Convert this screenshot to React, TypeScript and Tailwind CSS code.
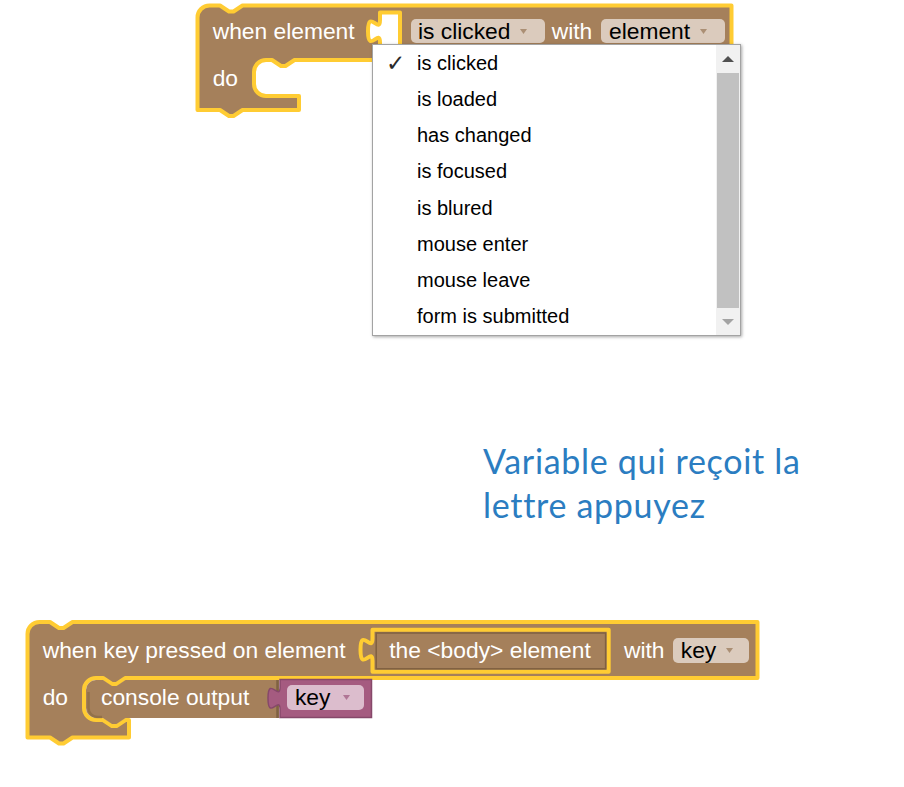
import React from 'react';

const brown = '#a5805b';
const gold = '#ffcc33';
const purple = '#a55b80';

const events = [
  'is clicked',
  'is loaded',
  'has changed',
  'is focused',
  'is blured',
  'mouse enter',
  'mouse leave',
  'form is submitted',
];

const Caret = ({ color }: { color: string }) => (
  <svg width="7" height="5" viewBox="0 0 7 5" className="shrink-0">
    <path d="M0 0h7L3.5 5z" fill={color} />
  </svg>
);

function EventMenu() {
  return (
    <div className="absolute left-[179px] top-[44px] z-10 flex w-[369px] h-[292px] border border-[#a3a3a3] bg-white shadow-[1px_1px_3px_rgba(0,0,0,0.35)] text-[20px] text-black">
      <ul className="flex-1">
        {events.map((e, i) => (
          <li key={e} className="flex items-center h-[36.15px] leading-none">
            <span className="w-[44px] pl-[13px] font-['DejaVu_Sans',sans-serif] text-[23px] font-bold text-[#2a2a2a]">
              {i === 0 ? '✓' : ''}
            </span>
            <span>{e}</span>
          </li>
        ))}
      </ul>
      <div className="flex flex-col w-[24px] bg-[#f1f1f1]">
        <div className="flex items-center justify-center h-[28px]">
          <svg width="12" height="6" viewBox="0 0 12 6">
            <path d="M6 0L12 6H0z" fill="#505050" />
          </svg>
        </div>
        <div className="mx-[1px] h-[235px] bg-[#c1c1c1]" />
        <div className="flex flex-1 items-center justify-center">
          <svg width="12" height="6" viewBox="0 0 12 6">
            <path d="M0 0h12L6 6z" fill="#a3a3a3" />
          </svg>
        </div>
      </div>
    </div>
  );
}

function WhenElementBlock() {
  return (
    <div className="relative ml-[193px] w-[545px] h-[125px] shrink-0">
      <svg className="absolute inset-0 overflow-visible" width="545" height="125" viewBox="193 0 545 125">
        <path
          fillRule="evenodd"
          fill={brown}
          stroke={gold}
          strokeWidth="4"
          strokeLinejoin="round"
          d="M197.5 17.5A12 12 0 0 1 209.5 5.5H220l9 6h4.5l9-6H731.5V60H294.5l-9 6h-4.5l-9-6H266A12 12 0 0 0 254 72V84A12 12 0 0 0 266 96H299V110H242.5l-9 6h-4.5l-9-6H197.5Z M400 12.5H380V20c0 15-12-12-12 11.25s12-3.75 12 11.25V52H400Z"
        />
      </svg>
      <div className="relative flex flex-col pt-[6px] pl-[19.7px] text-white leading-[23px]">
        <div className="flex items-center h-[50px]">
          <span className="w-[198px] whitespace-nowrap">when element</span>
          <span className="flex items-center h-[23.5px] pl-[7.3px] pr-[18px] rounded-[5px] bg-[#dbcbbd] text-black">
            <span className="w-[92.5px] whitespace-nowrap">is clicked</span>
            <span className="ml-[9.5px]"><Caret color="#ab8f74" /></span>
          </span>
          <span className="ml-[6.7px] w-[40.5px]">with</span>
          <span className="ml-[8.8px] flex items-center h-[23.5px] pl-[8px] pr-[18.4px] rounded-[5px] bg-[#dbcbbd] text-black">
            <span className="w-[81.1px] whitespace-nowrap">element</span>
            <span className="ml-[9.5px]"><Caret color="#ab8f74" /></span>
          </span>
        </div>
        <div className="flex items-center h-[45px]">
          <span>do</span>
        </div>
      </div>
      <EventMenu />
    </div>
  );
}

function KeyPressedBlock() {
  return (
    <div className="relative ml-[23px] mt-[89px] w-[740px] h-[135px] shrink-0">
      <svg className="absolute inset-0 overflow-visible" width="740" height="135" viewBox="23 615 740 135">
        {/* event block */}
        <path
          fill={brown}
          stroke={gold}
          strokeWidth="4"
          strokeLinejoin="round"
          d="M27.5 633A12 12 0 0 1 39.5 621H50l9 6h4.5l9-6H757.5V677H125.5l-9 6h-4.5l-9-6H96A12 12 0 0 0 84 689V707A12 12 0 0 0 96 719H103l9 6h4.5l9-6H129V736.5H72.5l-9 6h-4.5l-9-6H27.5Z"
        />
        {/* console output */}
        <path
          fill={brown}
          d="M86 689A10 10 0 0 1 96 679H103l9 6h4.5l9-6H279V717H125.5l-9 6h-4.5l-9-6H96A10 10 0 0 1 86 707Z"
        />
        <path d="M88.5 691V707A9 9 0 0 0 97.5 716H102" fill="none" stroke="#86673f" strokeWidth="2.5" strokeOpacity="0.6" />
        <path d="M277.5 679V717" stroke="#7f6243" strokeWidth="2.5" />
        {/* key variable */}
        <path
          fill={purple}
          stroke="#86486a"
          strokeWidth="1.5"
          d="M280 678.5H371.5V716.5H280V708.5c0-15-12 12-12-11.25s12 3.75 12-11.25Z"
        />
        {/* the <body> element */}
        <path
          fill={brown}
          stroke={gold}
          strokeWidth="4"
          strokeLinejoin="round"
          d="M372.5 628.7H608.7V670.8H372.5V660c0-15-12 12-12-11.25s12 3.75 12-11.25Z"
        />
        <rect x="376.2" y="632" width="229.4" height="35.8" fill="none" stroke="#7f6042" strokeWidth="1.5" />
      </svg>
      <div className="relative flex flex-col pt-[6px] pl-[19.7px] text-white leading-[23px]">
        <div className="flex items-center h-[56px]">
          <span className="w-[329.8px] whitespace-nowrap">when key pressed on element</span>
          <span className="w-[236.2px] pl-[16.8px] whitespace-nowrap">the &lt;body&gt; element</span>
          <span className="ml-[15.3px] w-[40.5px]">with</span>
          <span className="ml-[8.8px] flex items-center h-[25px] pl-[7.5px] pr-[16.3px] rounded-[5px] bg-[#dbcbbd] text-black">
            <span className="w-[35.5px]">key</span>
            <span className="ml-[9.7px]"><Caret color="#ab8f74" /></span>
          </span>
        </div>
        <div className="flex items-center h-[39px]">
          <span className="w-[58.3px]">do</span>
          <span className="w-[185.7px] whitespace-nowrap">console output</span>
          <span className="flex items-center h-[25px] pl-[8.3px] pr-[14px] rounded-[5px] bg-[#dcbdcd] text-black">
            <span className="w-[35.5px]">key</span>
            <span className="ml-[12.5px]"><Caret color="#b07595" /></span>
          </span>
        </div>
      </div>
    </div>
  );
}

export default function App() {
  return (
    <div className="flex flex-col w-[904px] h-[787px] overflow-hidden bg-white font-['Liberation_Sans',Arial,sans-serif] text-[22.8px]">
      <WhenElementBlock />
      <p className="mt-[314px] ml-[483px] font-['Lato',sans-serif] text-[34px] leading-[44px] tracking-[0.7px] text-[#2b7dc1]">
        Variable qui reçoit la
        <br />
        lettre appuyez
      </p>
      <KeyPressedBlock />
    </div>
  );
}
